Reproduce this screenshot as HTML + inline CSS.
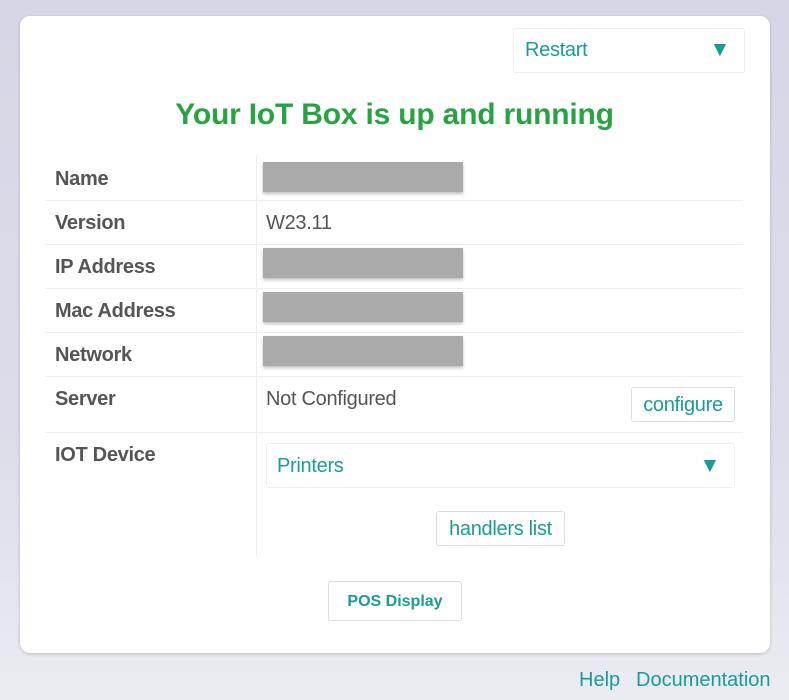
<!DOCTYPE html>
<html><head><style>
body{margin:0;width:789px;height:700px;overflow:hidden;background:linear-gradient(180deg,#d6d6e6 0%,#dcdcea 60%,#ebebf2 100%);font-family:"Liberation Sans",sans-serif;position:relative}
.card{position:absolute;left:20px;top:16px;width:750px;height:637px;background:#fff;border-radius:10px;box-shadow:0 1px 3px rgba(0,0,0,.2)}
.a{position:absolute}
.lbl{position:absolute;left:55px;font-size:20px;font-weight:bold;color:#555;letter-spacing:-0.3px}
.val{position:absolute;left:266px;font-size:20px;color:#555;letter-spacing:-0.3px}
.hr{position:absolute;left:45px;width:698px;height:1px;background:#eee}
.gray{position:absolute;left:263px;width:200px;height:30px;background:#aaa;box-shadow:0 2px 3px rgba(0,0,0,.25)}
.btn{position:absolute;border:1px solid #ddd;border-radius:3px;background:#fff;color:#1a9c96;font-size:20px;text-align:center;box-sizing:border-box;letter-spacing:-0.3px}
.arr{position:absolute;right:14px;font-size:21px}
.teal{color:#1a9c96}
</style></head><body>
<div class="card"></div>
<div class="btn" style="left:513px;top:28px;width:232px;height:45px;text-align:left;padding:10px 0 0 11px;border-color:#eee">Restart<span class="arr" style="top:9px">▼</span></div>
<div class="a" style="left:0;width:789px;top:98px;text-align:center;font-size:30px;font-weight:bold;color:#28a342;letter-spacing:-0.2px">Your IoT Box is up and running</div>
<div class="a" style="left:256px;top:155px;width:1px;height:401px;background:#eee"></div>
<div class="lbl" style="top:168px">Name</div><div class="gray" style="top:162px"></div>
<div class="hr" style="top:200px"></div>
<div class="lbl" style="top:212px">Version</div><div class="val" style="top:212px;">W23.11</div>
<div class="hr" style="top:244px"></div>
<div class="lbl" style="top:256px">IP Address</div><div class="gray" style="top:248px"></div>
<div class="hr" style="top:288px"></div>
<div class="lbl" style="top:300px">Mac Address</div><div class="gray" style="top:292px"></div>
<div class="hr" style="top:332px"></div>
<div class="lbl" style="top:344px">Network</div><div class="gray" style="top:336px"></div>
<div class="hr" style="top:376px"></div>
<div class="lbl" style="top:388px">Server</div><div class="val" style="top:388px">Not Configured</div>
<div class="btn" style="left:631px;top:387px;width:104px;height:35px;padding-top:6px">configure</div>
<div class="hr" style="top:432px"></div>
<div class="lbl" style="top:444px">IOT Device</div>
<div class="btn" style="left:266px;top:443px;width:469px;height:45px;text-align:left;padding:11px 0 0 10px;border-color:#eee">Printers<span class="arr" style="top:10px">▼</span></div>
<div class="btn" style="left:436px;top:511px;width:129px;height:35px;padding-top:6px">handlers list</div>
<div class="btn" style="left:328px;top:581px;width:134px;height:40px;padding-top:11px;font-size:16px;font-weight:bold;letter-spacing:0">POS Display</div>
<div class="a teal" style="left:579px;top:669px;font-size:20px">Help</div>
<div class="a teal" style="left:636px;top:669px;font-size:20px">Documentation</div>
</body></html>
